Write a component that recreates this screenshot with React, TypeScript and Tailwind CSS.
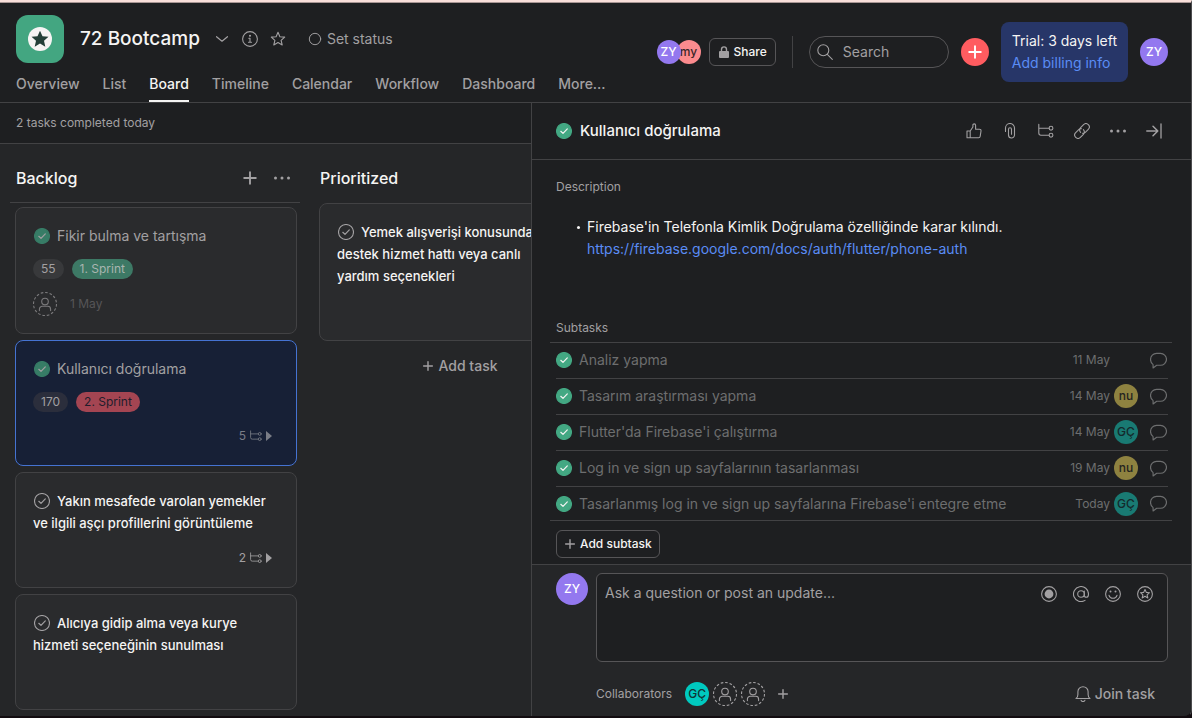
import type { ReactNode } from "react";

type IconProps = { className?: string };

function Svg({ className = "size-4", children, view = "0 0 16 16" }: IconProps & { children: ReactNode; view?: string }) {
  return (
    <svg viewBox={view} className={className} fill="none" stroke="currentColor" strokeWidth="1.1" strokeLinecap="round" strokeLinejoin="round" aria-hidden="true">
      {children}
    </svg>
  );
}

const STAR = "M8 1.3l1.9 4.4 4.8.4-3.6 3.2 1.1 4.7L8 11.5 3.8 14l1.1-4.7L1.3 6.1l4.8-.4z";

const Plus = ({ className }: IconProps) => (
  <Svg className={className}><path d="M8 2.200v11.600M2.200 8h11.600" strokeWidth="1.900" /></Svg>
);
const Dots = ({ className }: IconProps) => (
  <Svg className={className}>
    <g fill="currentColor" stroke="none"><circle cx="1.5" cy="8" r="1.5" /><circle cx="8" cy="8" r="1.5" /><circle cx="14.5" cy="8" r="1.5" /></g>
  </Svg>
);
const StarIcon = ({ className }: IconProps) => <Svg className={className}><path d={STAR} /></Svg>;
const SubtaskIcon = ({ className }: IconProps) => (
  <Svg className={className}>
    <path d="M.8 1.200v8.800a2.200 2.200 0 0 0 2.200 2.200h8M.8 5.200H11" />
    <circle cx="13" cy="5.200" r="1.900" /><circle cx="13" cy="12.200" r="1.900" />
  </Svg>
);
const PersonIcon = ({ className }: IconProps) => (
  <Svg className={className} view="0 0 24 24">
    <circle cx="12" cy="12" r="11.5" strokeDasharray="2.6 1.9" strokeLinecap="butt" />
    <circle cx="12" cy="9.600" r="3.300" />
    <path d="M6.400 18.600v-1.400a2.900 2.900 0 0 1 2.900-2.900h5.400a2.900 2.900 0 0 1 2.900 2.900v1.400" />
  </Svg>
);
const CommentIcon = ({ className }: IconProps) => (
  <Svg className={className}>
    <path d="M2.900 15v-3.100A6 6 0 0 1 .5 7.100C.5 3.900 3 1.300 6.200 1.300h3.600c3.100 0 5.700 2.400 5.700 5.600s-2.600 5.600-5.700 5.600H6.300z" />
  </Svg>
);

function Check({ className = "size-4", tone }: IconProps & { tone: "done" | "dim" | "open" }) {
  const fill = tone === "done" ? "#43a883" : tone === "dim" ? "#377c66" : "none";
  return (
    <Svg className={className}>
      <circle cx="8" cy="8" r="7.5" fill={fill} stroke={tone === "open" ? "#a2a0a2" : fill} />
      <path d="M4.800 8.300l2.200 2.100 4.300-4.500" stroke={tone === "done" ? "#f5f4f3" : "#a2a0a2"} strokeWidth="1.200" />
    </Svg>
  );
}

function Avatar({ children, className }: { children: ReactNode; className: string }) {
  return <span className={`flex shrink-0 items-center justify-center rounded-full text-xs font-medium ${className}`}>{children}</span>;
}

const TABS = ["Overview", "List", "Board", "Timeline", "Calendar", "Workflow", "Dashboard", "More..."];

function Header() {
  return (
    <header className="flex shrink-0 justify-between border-b border-[#424244] bg-[#1e1f21] pr-[23px] pl-4">
      <div className="pt-3">
        <div className="flex h-12 items-center">
          <span className="flex size-12 items-center justify-center rounded-xl bg-[#43a681]">
            <svg viewBox="0 0 24 24" className="size-6" aria-hidden="true">
              <circle cx="12" cy="12" r="12" fill="#f5f4f3" />
              <path d="M12 3.700l2.500 5.500 6 .6-4.500 4 1.300 5.900-5.300-3.100-5.300 3.100L8 13.800l-4.500-4 6-.6z" fill="#233f37" />
            </svg>
          </span>
          <h1 className="ml-4 text-[19px] leading-7 font-medium">72 Bootcamp</h1>
          <button aria-label="Project actions" className="ml-4 text-[#a2a0a2]">
            <Svg className="size-3"><path d="M.7 5l7.300 6 7.300-6" strokeWidth="1.600" /></Svg>
          </button>
          <button aria-label="Project details" className="ml-3.5 text-[#a2a0a2]">
            <Svg className="size-4"><circle cx="8" cy="8" r="7.400" /><path d="M6.800 7.200H8v4M6.500 11.300h3" /><circle cx="8" cy="4.700" r=".5" fill="currentColor" /></Svg>
          </button>
          <button aria-label="Add to favorites" className="ml-3 text-[#a2a0a2]"><StarIcon className="size-4" /></button>
          <button className="ml-[22px] flex items-center gap-[5px] text-sm text-[#a2a0a2]">
            <Svg className="size-3.5"><circle cx="8" cy="8" r="6.500" /></Svg>
            Set status
          </button>
        </div>
        <nav className="flex h-[39px] gap-[23px] text-sm font-medium text-[#a2a0a2]">
          {TABS.map((t) => (
            <a key={t} href="#" className={t === "Board" ? "border-b-2 border-[#f5f4f3] pt-[11px] text-[#f5f4f3]" : "pt-[11px]"}>{t}</a>
          ))}
        </nav>
      </div>
      <div className="flex items-center pb-px">
        <div className="flex items-center">
          <Avatar className="z-10 size-6 bg-[#9378ef] text-white">ZY</Avatar>
          <Avatar className="-ml-1 size-6 bg-[#fc8b8e] text-[#3d2629]">my</Avatar>
        </div>
        <button className="ml-2 flex h-7 items-center gap-1 rounded-md border border-[#565557] px-2 text-xs font-medium">
          <svg viewBox="0 0 12 12" className="size-3" aria-hidden="true">
            <rect x="1" y="5" width="10" height="7" rx="1" fill="#a2a0a2" />
            <path d="M3.500 5V3.400a2.500 2.500 0 0 1 5 0V5" fill="none" stroke="#a2a0a2" strokeWidth="1.400" />
          </svg>
          Share
        </button>
        <span className="mx-4 h-8 w-px bg-[#424244]" />
        <label className="flex h-8 w-[140px] items-center gap-2.5 rounded-full border border-[#565557] px-[7px] text-[#a2a0a2]">
          <Svg className="size-4 shrink-0"><circle cx="6.300" cy="6.300" r="5.500" /><path d="M10.300 10.300l5 5" /></Svg>
          <input aria-label="Search" placeholder="Search" className="w-full min-w-0 bg-transparent text-sm outline-none placeholder:text-[#a2a0a2]" />
        </label>
        <button aria-label="Create" className="ml-3 flex size-7 items-center justify-center rounded-full bg-[#ff5c60] text-white"><Plus className="size-4" /></button>
        <div className="ml-3 flex h-[60px] flex-col justify-center rounded-lg bg-[#273668] px-[11px] text-sm leading-[22px]">
          <span>Trial: 3 days left</span>
          <a href="#" className="text-[#5a8cf5]">Add billing info</a>
        </div>
        <Avatar className="ml-3 size-7 bg-[#9378ef] text-white">ZY</Avatar>
      </div>
    </header>
  );
}

type Task = { title: string; done?: boolean; selected?: boolean; points?: string; sprint?: string; tone?: string; due?: string; subtasks?: string; height: string };

const BACKLOG: Task[] = [
  { title: "Fikir bulma ve tartışma", done: true, points: "55", sprint: "1. Sprint", tone: "bg-[#3d7965] text-[#a9b5b0]", due: "1 May", height: "min-h-[127px]" },
  { title: "Kullanıcı doğrulama", done: true, selected: true, points: "170", sprint: "2. Sprint", tone: "bg-[#a44552] text-[#211d2c]", subtasks: "5", height: "min-h-[126px]" },
  { title: "Yakın mesafede varolan yemekler\nve ilgili aşçı profillerini görüntüleme", subtasks: "2", height: "min-h-[116px]" },
  { title: "Alıcıya gidip alma veya kurye\nhizmeti seçeneğinin sunulması", height: "min-h-[116px]" },
];

function Card({ task }: { task: Task }) {
  const look = task.selected ? "border-[#4573d2] bg-[#172036]" : "border-[#424244] bg-[#2a2b2d]";
  return (
    <article className={`flex shrink-0 flex-col rounded-lg border p-[17px] ${look} ${task.height}`}>
      <h3 className={`leading-[22px] whitespace-pre-line ${task.done ? "text-sm leading-[22px] text-[#a2a0a2]" : "text-[13px] font-medium text-[#f5f4f3]"}`}>
        <Check tone={task.done ? "dim" : "open"} className="mr-[7px] ml-px inline size-4 align-[-3px]" />
        {task.title}
      </h3>
      {task.points && (
        <div className="mt-3 flex gap-2 text-xs leading-5">
          <span className={`rounded-full px-2 text-[#a2a0a2] ${task.selected ? "bg-[#2b2e3c]" : "bg-[#38393b]"}`}>{task.points}</span>
          <span className={`rounded-full px-2 ${task.tone}`}>{task.sprint}</span>
        </div>
      )}
      {task.due && (
        <div className="mt-[13px] flex items-center gap-[13px] text-xs text-[#565557]">
          <PersonIcon className="size-6 text-[#7b7a7c]" />
          {task.due}
        </div>
      )}
      {task.subtasks && (
        <div className={`mt-auto mr-[7px] flex items-center justify-end gap-1 pb-1 text-xs ${task.selected ? "text-[#7a7d86]" : "text-[#a2a0a2]"}`}>
          {task.subtasks}
          <SubtaskIcon className="size-3" />
          <svg viewBox="0 0 6 10" className="h-2.5 w-1.5" aria-hidden="true"><path d="M0 0l6 5-6 5z" fill="currentColor" /></svg>
        </div>
      )}
    </article>
  );
}

function Board() {
  return (
    <main className="flex min-w-0 flex-1 flex-col overflow-hidden bg-[#252628]">
      <p className="flex h-[41px] shrink-0 items-center border-b border-[#424244] bg-[#1e1f21] px-4 text-xs text-[#a2a0a2]">2 tasks completed today</p>
      <div className="flex min-h-0 flex-1 gap-5 overflow-hidden pt-3 pl-2.5">
        <section className="flex w-[290px] shrink-0 flex-col">
          <div className="flex h-[47px] shrink-0 items-start justify-between border-b border-[#424244] pt-2.5 pr-2.5 pl-1.5">
            <h2 className="text-base font-medium">Backlog</h2>
            <div className="flex gap-4 pt-1 text-[#a2a0a2]">
              <button aria-label="Add task"><Plus className="size-4" /></button>
              <button aria-label="More section actions"><Dots className="size-4" /></button>
            </div>
          </div>
          <div className="flex min-h-0 flex-1 flex-col gap-1.5 overflow-hidden pt-1 pr-[3px] pl-[5px]">
            {BACKLOG.map((t) => <Card key={t.title} task={t} />)}
            <article className="min-h-[116px] shrink-0 rounded-lg border border-[#424244] bg-[#2a2b2d]" />
          </div>
        </section>
        <section className="-ml-px flex w-[282px] shrink-0 flex-col">
          <h2 className="h-[47px] shrink-0 pt-2.5 pl-px text-base font-medium">Prioritized</h2>
          <Card task={{ title: "Yemek alışverişi konusunda\ndestek hizmet hattı veya canlı\nyardım seçenekleri", height: "min-h-[138px]" }} />
          <button className="mt-[15px] flex items-center justify-center gap-1 text-sm font-medium text-[#a2a0a2]"><Plus className="size-3" />Add task</button>
        </section>
      </div>
    </main>
  );
}

const SUBTASKS = [
  { name: "Analiz yapma", due: "11 May", who: "" },
  { name: "Tasarım araştırması yapma", due: "14 May", who: "nu" },
  { name: "Flutter'da Firebase'i çalıştırma", due: "14 May", who: "GÇ" },
  { name: "Log in ve sign up sayfalarının tasarlanması", due: "19 May", who: "nu" },
  { name: "Tasarlanmış log in ve sign up sayfalarına Firebase'i entegre etme", due: "Today", who: "GÇ" },
];

function DetailPane() {
  return (
    <aside className="flex w-[660px] max-w-full shrink-0 flex-col border-l border-[#424244] bg-[#1e1f21]">
      <div className="flex h-[57px] shrink-0 items-center justify-between border-b border-[#424244] pr-[23px] pl-6">
        <h2 className="flex items-center gap-2 text-[15px] leading-6 font-medium"><Check tone="done" />Kullanıcı doğrulama</h2>
        <div className="flex gap-5 pr-1.5 text-[#a2a0a2]">
          <button aria-label="Like"><Svg><path d="M1 8h3.200v6.700H1zM4.200 8L6.900 4V2.100c0-.7.600-1.200 1.300-1.200s1.400.600 1.400 1.400V6.200h3.800c1 0 1.800.8 1.600 1.800l-.8 5.300c-.1.800-.7 1.400-1.500 1.400H4.200" /></Svg></button>
          <button aria-label="Attach"><Svg><path d="M3.500 8.500V5a4.500 4.500 0 0 1 9 0v7a3 3 0 0 1-6 0V6.200a1.500 1.500 0 0 1 3 0v5" /></Svg></button>
          <button aria-label="Subtasks"><SubtaskIcon /></button>
          <button aria-label="Copy link"><Svg><path d="M6.600 9.400a3.300 3.300 0 0 1 0-4.700l3-3a3.300 3.300 0 0 1 4.700 4.700l-3 3a3.300 3.300 0 0 1-2.800.9M9.400 6.600a3.300 3.300 0 0 1 0 4.700l-3 3a3.300 3.300 0 0 1-4.700-4.700l3-3a3.300 3.300 0 0 1 2.800-.9" /></Svg></button>
          <button aria-label="More actions"><Dots /></button>
          <button aria-label="Close details"><Svg><path d="M.8 8h11M7 3.200L11.800 8 7 12.800" strokeWidth="1.500" /><path d="M15 1v14" strokeWidth="1.300" /></Svg></button>
        </div>
      </div>

      <div className="flex min-h-0 flex-1 flex-col overflow-hidden pr-[23px] pl-6">
        <h3 className="mt-[19px] text-xs text-[#a2a0a2]">Description</h3>
        <ul className="mt-[21px] pl-[21px] text-sm leading-[22px]">
          <li className="flex gap-[7px]">
            <span className="mt-2.5 size-[3px] shrink-0 rounded-full bg-[#f5f4f3]" />
            <div>
              Firebase'in Telefonla Kimlik Doğrulama özelliğinde karar kılındı.
              <br />
              <a href="#" className="text-[#5a8cf5]">https://firebase.google.com/docs/auth/flutter/phone-auth</a>
            </div>
          </li>
        </ul>
        <h3 className="mt-[60px] text-xs text-[#a2a0a2]">Subtasks</h3>
        <ul className="mt-1.5 -mr-1 -ml-1.5 border-y border-[#424244] pr-1 pl-1.5">
          {SUBTASKS.map((s) => (
            <li key={s.name} className="flex h-9 items-center border-b border-[#424244] pr-px pb-px last:h-[33px] last:border-b-0 last:pb-0">
              <Check tone="done" />
              <span className="ml-[7px] min-w-0 flex-1 truncate text-sm text-[#6d6e6f]">{s.name}</span>
              <span className="text-xs text-[#6d6e6f]">{s.due}</span>
              <span className="mr-3 ml-1 size-6">
                {s.who && <Avatar className={s.who === "nu" ? "size-6 bg-[#8e8240] text-[#24241f]" : "size-6 bg-[#197a73] text-[#14292b]"}>{s.who}</Avatar>}
              </span>
              <button aria-label={`Comment on ${s.name}`} className="text-[#6d6e6f]"><CommentIcon className="size-[17px]" /></button>
            </li>
          ))}
        </ul>
        <button className="mt-[9px] flex h-7 shrink-0 items-center gap-1 self-start rounded-md border border-[#565557] px-[7px] text-xs font-medium">
          <Plus className="size-3 text-[#a2a0a2]" />Add subtask
        </button>
      </div>

      <footer className="shrink-0 border-t border-[#424244] bg-[#252628] pt-2 pr-[23px] pl-6">
        <div className="flex gap-2">
          <Avatar className="size-8 bg-[#9378ef] text-white">ZY</Avatar>
          <div className="flex h-[89px] flex-1 rounded-md border border-[#565557] bg-[#1e1f21] pr-3.5">
            <textarea aria-label="Comment" placeholder="Ask a question or post an update..." className="flex-1 resize-none bg-transparent px-2 py-2 text-sm leading-[22px] outline-none placeholder:text-[#a2a0a2]" />
            <div className="flex items-start gap-4 pt-3 text-[#a2a0a2]">
              <button aria-label="Record"><Svg><circle cx="8" cy="8" r="7.400" /><circle cx="8" cy="8" r="4.400" fill="currentColor" stroke="none" /></Svg></button>
              <button aria-label="Mention"><Svg><circle cx="8" cy="8" r="3.300" /><path d="M11.300 5v4.300c0 1.200.8 2 2 2s2.200-1.300 2.200-3.300A7.500 7.500 0 1 0 12 14.400" /></Svg></button>
              <button aria-label="Emoji"><Svg><circle cx="8" cy="8" r="7.400" /><path d="M4 9.300c.6 1.900 2.100 3 4 3s3.400-1.100 4-3" /><g fill="currentColor" stroke="none"><circle cx="5.500" cy="5.500" r="1" /><circle cx="10.500" cy="5.500" r="1" /></g></Svg></button>
              <button aria-label="Appreciation"><Svg><circle cx="8" cy="8" r="7.400" /><path d="M8 3.500l1.300 2.900 3.200.3-2.400 2.100.7 3.100L8 10.300l-2.800 1.600.7-3.100-2.400-2.100 3.200-.3z" /></Svg></button>
            </div>
          </div>
        </div>
        <div className="flex h-[54px] items-center pt-2.5 pl-10 text-[#a2a0a2]">
          <span className="text-xs">Collaborators</span>
          <div className="ml-[13px] flex gap-1">
            <Avatar className="size-6 bg-[#00c9bf] text-[#123334]">GÇ</Avatar>
            <PersonIcon className="size-6" />
            <PersonIcon className="size-6" />
          </div>
          <button aria-label="Add collaborator" className="ml-3"><Plus className="size-3" /></button>
          <button className="mr-[13px] ml-auto flex items-center gap-1 text-sm font-medium">
            <Svg><path d="M1 12.500c1.400-1 1.900-2.200 1.900-4V5.800a5.100 5.100 0 0 1 10.200 0v2.700c0 1.800.5 3 1.900 4zM6 14.200c.3.900 1 1.400 2 1.400s1.700-.5 2-1.400" /></Svg>
            Join task
          </button>
        </div>
      </footer>
    </aside>
  );
}

export default function App() {
  return (
    <div className="h-screen bg-[#120c10] font-['Inter','Liberation_Sans',sans-serif] text-[#f5f4f3]">
      <div className="flex h-full flex-col overflow-hidden rounded-br-lg border-t-2 border-r border-b-2 border-t-[#f9dfda] border-r-[#4c4c4e] border-b-[#120c10]">
        <div className="h-px shrink-0 bg-[#a89694]" />
        <Header />
        <div className="flex min-h-0 flex-1">
          <Board />
          <DetailPane />
        </div>
      </div>
    </div>
  );
}
